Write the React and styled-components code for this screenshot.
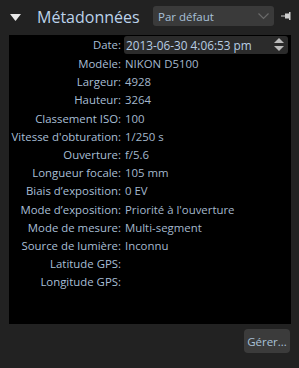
import React from "react";
import styled, { createGlobalStyle } from "styled-components";

const Global = createGlobalStyle`
  html, body {
    margin: 0;
    padding: 0;
    background: #222222;
  }
  body {
    font-family: "Open Sans", "Noto Sans", sans-serif;
  }
`;

const Panel = styled.div`
  width: 299px;
  height: 368px;
  box-sizing: border-box;
  background: #222222;
  display: flex;
  flex-direction: column;
`;

const Header = styled.div`
  height: 35px;
  display: flex;
  align-items: center;
  padding: 0 0 0 10px;
`;

const Title = styled.div`
  margin-left: 16px;
  font-size: 16px;
  color: #bcd3ea;
  flex: 1;
  margin-top: -1px;
`;

const Select = styled.div`
  flex-shrink: 0;
  width: 121px;
  height: 20px;
  box-sizing: border-box;
  background: #3a3a3a;
  border-radius: 3px;
  display: flex;
  align-items: center;
  justify-content: space-between;
  padding: 0 5px 0 5px;
  font-size: 11.5px;
  color: #a9c1d9;
  margin-top: -3px;
`;

const Pin = styled.svg`
  flex-shrink: 0;
  margin: -3px 8px 0 7px;
`;

const Body = styled.div`
  margin: 0 8px 0 9px;
  background: #000000;
  height: 289px;
`;

const Grid = styled.div`
  display: grid;
  grid-template-columns: 112px 1fr;
  column-gap: 3px;
  align-items: center;
  font-size: 11.4px;
`;

const Label = styled.div`
  text-align: right;
  color: #a8bfd6;
  height: ${({ $tall }) => ($tall ? "20px" : "18.2px")};
  line-height: ${({ $tall }) => ($tall ? "20px" : "18.2px")};
  white-space: nowrap;
`;

const Value = styled.div`
  color: #a4b8cc;
  height: 18.2px;
  line-height: 18.2px;
  white-space: nowrap;
  padding-left: 1px;
`;

const DateInput = styled.div`
  height: 18px;
  margin: 0 3px 1px 0;
  background: #2b2b2b;
  border-radius: 3px;
  display: flex;
  align-items: center;
  justify-content: space-between;
  padding: 0 4px 0 2px;
  color: #b7cde3;
  font-size: 11.8px;
`;

const Footer = styled.div`
  display: flex;
  justify-content: flex-end;
  padding: 5px 9px 0 0;
`;

const Button = styled.div`
  width: 46px;
  height: 24px;
  box-sizing: border-box;
  background: #3b3b3b;
  border-radius: 4px;
  display: flex;
  align-items: center;
  justify-content: center;
  font-size: 11.5px;
  color: #a8c0d8;
`;

const rows = [
  ["Modèle:", "NIKON D5100"],
  ["Largeur:", "4928"],
  ["Hauteur:", "3264"],
  ["Classement ISO:", "100"],
  ["Vitesse d'obturation:", "1/250 s"],
  ["Ouverture:", "f/5.6"],
  ["Longueur focale:", "105 mm"],
  ["Biais d’exposition:", "0 EV"],
  ["Mode d’exposition:", "Priorité à l'ouverture"],
  ["Mode de mesure:", "Multi-segment"],
  ["Source de lumière:", "Inconnu"],
  ["Latitude GPS:", ""],
  ["Longitude GPS:", ""],
];

export default function App() {
  return (
    <Panel>
      <Global />
      <Header>
        <svg width="11" height="7" viewBox="0 0 11 7">
          <polygon points="0,0 11,0 5.5,7" fill="#e8e8e8" />
        </svg>
        <Title>Métadonnées</Title>
        <Select>
          <span>Par défaut</span>
          <svg width="11" height="7" viewBox="0 0 11 7">
            <polyline points="0.5,0.5 5.5,5.5 10.5,0.5" fill="none" stroke="#6a6a6a" strokeWidth="1.2" />
          </svg>
        </Select>
        <Pin width="10" height="8" viewBox="0 0 10 8">
          <rect x="0" y="3.5" width="5" height="1" fill="#cfcfcf" />
          <rect x="4" y="1.5" width="4" height="5" fill="#cfcfcf" />
          <rect x="8" y="0" width="1.5" height="8" fill="#cfcfcf" />
        </Pin>
      </Header>
      <Body>
        <Grid>
          <Label $tall>Date:</Label>
          <DateInput>
            <span>2013-06-30 4:06:53 pm</span>
            <svg width="10" height="14" viewBox="0 0 10 14">
              <polygon points="5,0 10,5 0,5" fill="#bcbcbc" />
              <polygon points="0,8 10,8 5,13" fill="#bcbcbc" />
            </svg>
          </DateInput>
          {rows.map(([k, v]) => (
            <React.Fragment key={k}>
              <Label>{k}</Label>
              <Value>{v}</Value>
            </React.Fragment>
          ))}
        </Grid>
      </Body>
      <Footer>
        <Button>Gérer...</Button>
      </Footer>
    </Panel>
  );
}
